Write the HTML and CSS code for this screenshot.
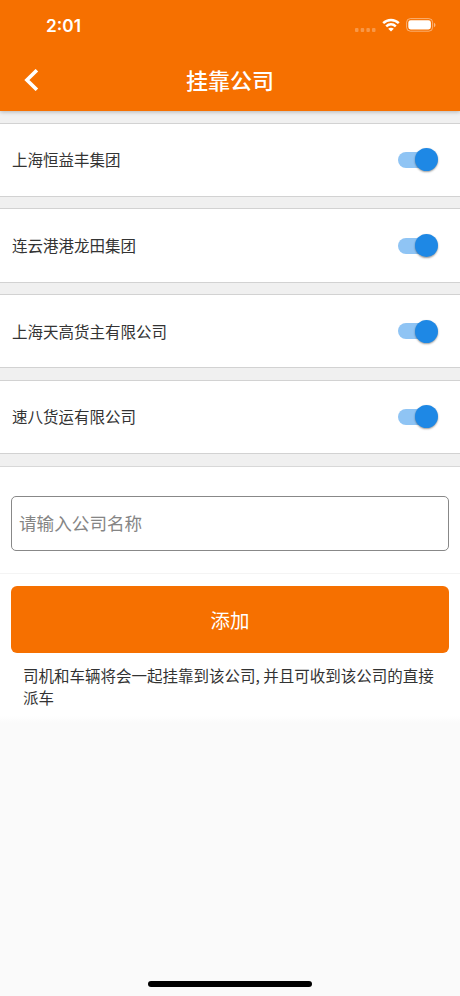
FILE: index.html
```html
<!DOCTYPE html>
<html lang="zh-CN">
<head>
<meta charset="utf-8">
<title>挂靠公司</title>
<link rel="stylesheet" href="styles.css">
</head>
<body>
<div class="screen">
  <header class="header">
    <div class="status">
      <span class="time">2:01</span>
      <div class="status-icons">
        <svg class="signal" width="21" height="4" viewBox="0 0 21 4"><rect x="0" y="0" width="3.5" height="4" rx="1"/><rect x="5.7" y="0" width="3.5" height="4" rx="1"/><rect x="11.4" y="0" width="3.5" height="4" rx="1"/><rect x="17" y="0" width="3.5" height="4" rx="1"/></svg>
        <svg class="wifi" width="18" height="14" viewBox="0 0 18 14"><path d="M1.2 5.1C5.6.8 12.4.8 16.8 5.1M4.2 8.3c2.8-2.6 6.8-2.6 9.6 0" fill="none" stroke="#fff" stroke-width="2.5"/><path d="M9 13.5 6.2 10.8c1.6-1.4 4-1.4 5.6 0z" fill="#fff"/></svg>
        <svg class="battery" width="30" height="14" viewBox="0 0 30 14"><rect x=".6" y=".6" width="26" height="12.6" rx="3.8" fill="none" stroke="#fff" stroke-opacity=".45"/><rect x="2.3" y="2.3" width="22.6" height="9.2" rx="2.4" fill="#fff"/><path d="M28 4.7c2 .9 2 3.6 0 4.5z" fill="#fff" fill-opacity=".5"/></svg>
      </div>
    </div>
    <div class="nav">
      <svg class="back" width="15" height="22" viewBox="0 0 15 22"><path d="M12.9 1.2 2.9 11l10 9.8" fill="none" stroke="#fff" stroke-width="3.6"/></svg>
      <h1 class="title">挂靠公司</h1>
    </div>
  </header>
  <main>
    <ul class="companies">
      <li class="company"><span class="name">上海恒益丰集团</span><span class="switch"><i class="thumb"></i></span></li>
      <li class="company"><span class="name">连云港港龙田集团</span><span class="switch"><i class="thumb"></i></span></li>
      <li class="company"><span class="name">上海天高货主有限公司</span><span class="switch"><i class="thumb"></i></span></li>
      <li class="company"><span class="name">速八货运有限公司</span><span class="switch"><i class="thumb"></i></span></li>
    </ul>
    <section class="entry">
      <input class="field" type="text" placeholder="请输入公司名称">
    </section>
    <section class="action">
      <button class="add" type="button">添加</button>
      <p class="note">司机和车辆将会一起挂靠到该公司, 并且可收到该公司的直接派车</p>
    </section>
  </main>
  <div class="home"></div>
</div>
</body>
</html>
```

FILE: styles.css
```css
* { box-sizing: border-box; }
body { margin: 0; }
.screen {
  display: flex;
  flex-direction: column;
  width: 460px;
  height: 996px;
  background: #fafafa;
  color: #333;
  font-family: "Noto Sans CJK SC", sans-serif;
  overflow: hidden;
}
.header {
  position: relative;
  z-index: 1;
  height: 111.4px;
  background: #f67000;
  color: #fff;
  box-shadow: 0 1px 4px rgba(0, 0, 0, .25);
}
.status {
  display: flex;
  justify-content: space-between;
  align-items: center;
  height: 50px;
  padding: 0 24px 0 46px;
}
.time {
  padding-top: 2px;
  font: 600 17.3px/20px Inter, sans-serif;
}
.status-icons { display: flex; align-items: center; }
.signal { margin: 9px 6px 0 0; fill: #fff; fill-opacity: .28; }
.wifi { margin-right: 6px; }
.nav {
  display: flex;
  align-items: center;
  height: 60px;
  padding: 0 24px;
}
.back { flex: none; }
.title {
  flex: 1;
  margin: 0 15px 0 0;
  padding-bottom: 3px;
  font-size: 22px;
  font-weight: 500;
  line-height: 32px;
  text-align: center;
}
.companies {
  display: flex;
  flex-direction: column;
  gap: 11.4px;
  margin: 0;
  padding: 11.4px 0 11.6px;
  background: #f0f0f0;
  list-style: none;
}
.company {
  display: flex;
  align-items: center;
  justify-content: space-between;
  height: 74.3px;
  padding: 0 23px 0 12px;
  border: solid #d2d2d2;
  border-width: 1px 0;
  background: #fff;
  font-size: 15.5px;
}
.name { padding-bottom: 1px; }
.switch {
  display: flex;
  align-items: center;
  justify-content: flex-end;
  width: 39px;
  height: 16px;
  border-radius: 8px;
  background: #8fc4f4;
}
.thumb {
  width: 23px;
  height: 23px;
  margin-right: -1px;
  border-radius: 50%;
  background: #1e88e5;
  box-shadow: 0 1px 2px rgba(0, 0, 0, .4);
}
.entry {
  height: 108.2px;
  padding: 29.4px 11px 0;
  border-top: 1px solid #d8d8d8;
  border-bottom: 1px solid #f4f4f4;
  background: #fff;
}
.field {
  display: block;
  width: 438px;
  height: 55px;
  padding: 0 7px 2px;
  border: 1px solid #888;
  border-radius: 5px;
  background: #fff;
  font: 17.6px "Noto Sans CJK SC", sans-serif;
}
.field::placeholder { color: #858585; opacity: 1; }
.action {
  height: 149px;
  padding: 11.6px 11px 0;
  background: linear-gradient(#fff 142px, #fafafa);
}
.add {
  display: block;
  width: 438px;
  height: 67.4px;
  padding: 0;
  border: 0;
  border-radius: 6px;
  background: #f67000;
  color: #fff;
  font: 19.5px "Noto Sans CJK SC", sans-serif;
}
.note {
  margin: 11px 11px 0 12px;
  font-size: 15.5px;
  line-height: 22px;
}
.home {
  width: 164px;
  height: 6px;
  margin: auto auto 9px;
  border-radius: 3px;
  background: #000;
}
```
